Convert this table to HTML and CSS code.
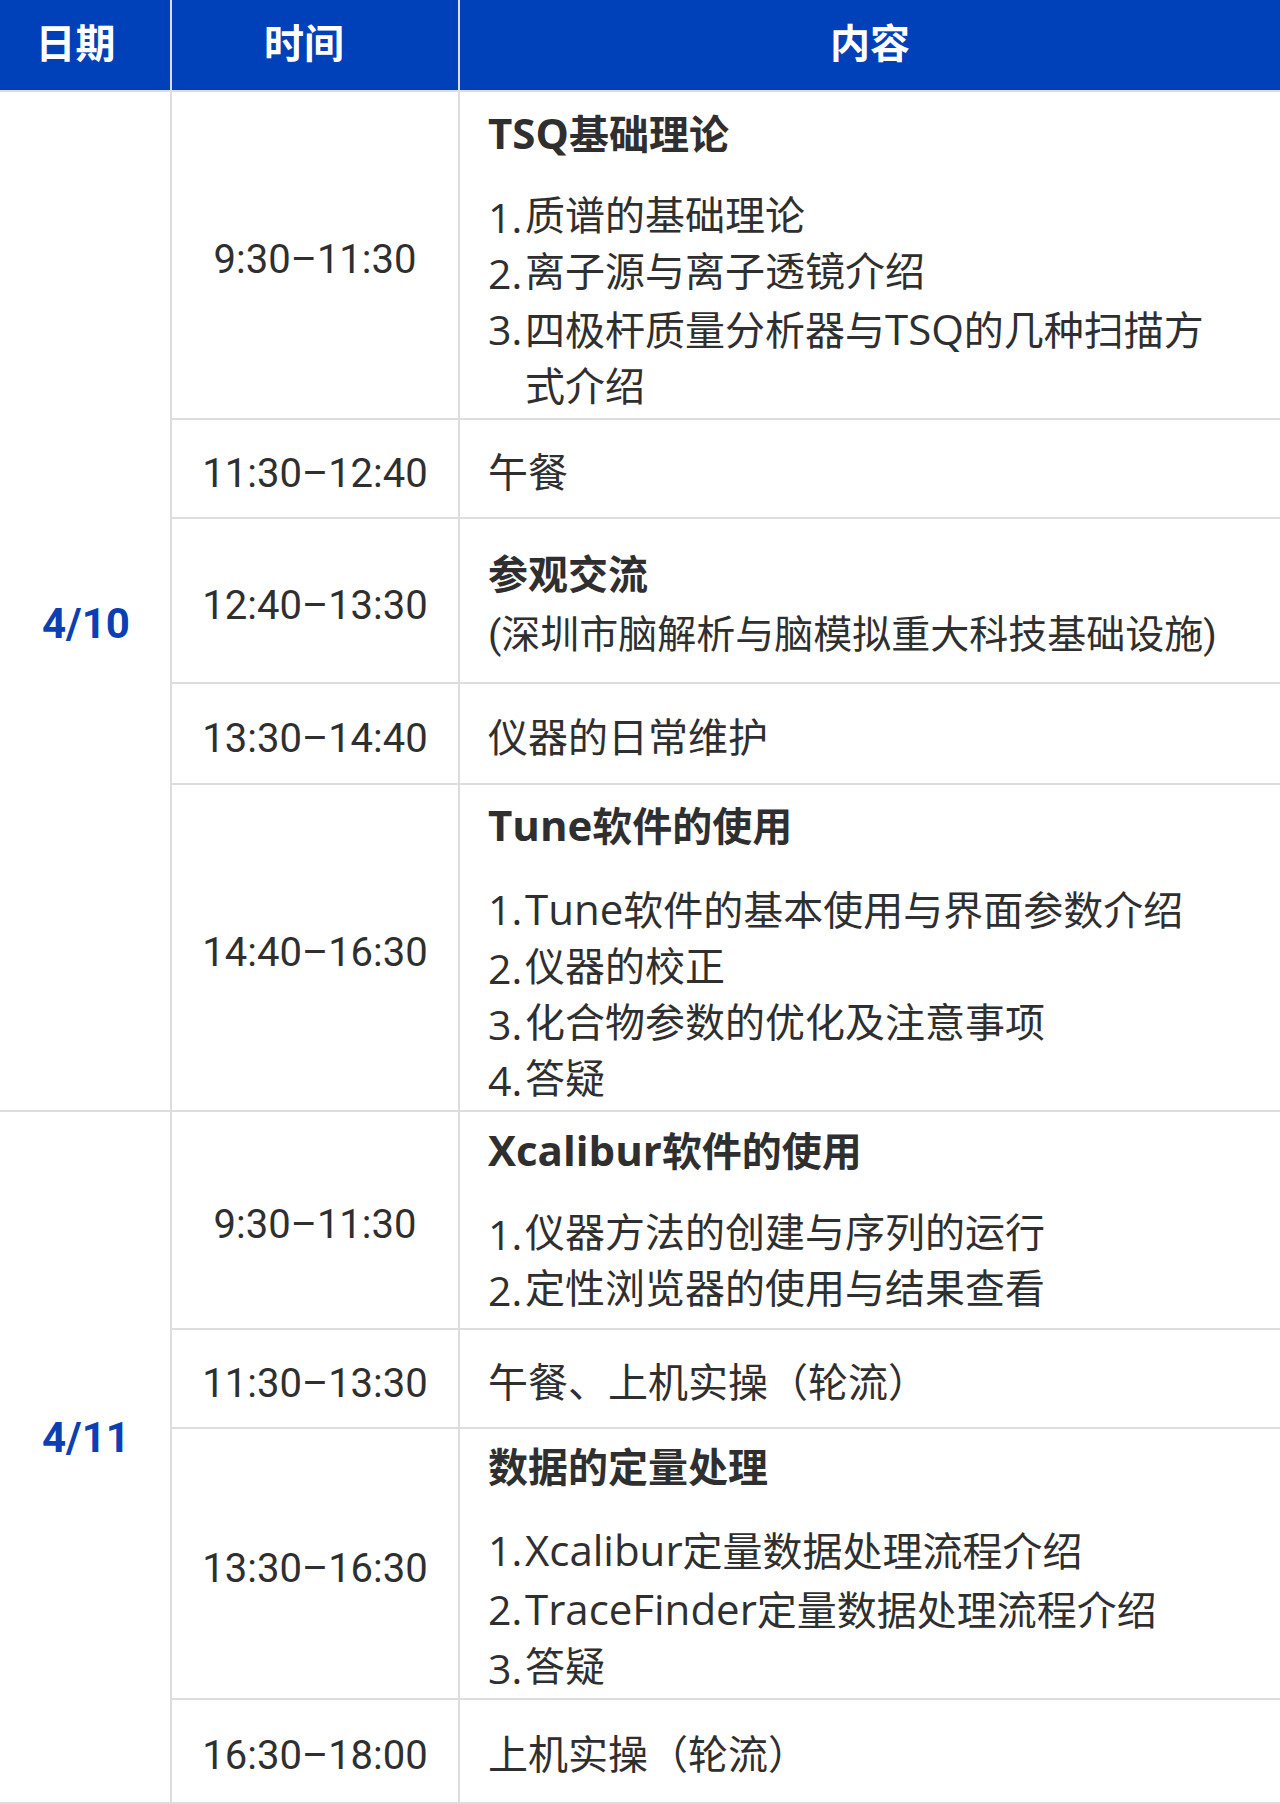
FILE: index.html
```html
<!DOCTYPE html>
<html lang="zh-CN">
<head>
<meta charset="utf-8">
<title>日程安排</title>
<link rel="stylesheet" href="styles.css">
</head>
<body>
<div class="schedule">
  <div class="th th-date">日期</div>
  <div class="th th-time">时间</div>
  <div class="th th-content">内容</div>

  <div class="date date-a">4/10</div>

  <div class="time r1">9:30–11:30</div>
  <div class="content r1">
    <div class="title spaced"><span class="lat">TSQ</span>基础理论</div>
    <div class="item"><span class="num">1.</span><span class="txt">质谱的基础理论</span></div>
    <div class="item"><span class="num">2.</span><span class="txt">离子源与离子透镜介绍</span></div>
    <div class="item"><span class="num">3.</span><span class="txt">四极杆质量分析器与<span class="lat">TSQ</span>的几种扫描方<br>式介绍</span></div>
  </div>

  <div class="time r2">11:30–12:40</div>
  <div class="content r2"><div class="line">午餐</div></div>

  <div class="time r3">12:40–13:30</div>
  <div class="content r3">
    <div class="title tight">参观交流</div>
    <div class="line sub">(深圳市脑解析与脑模拟重大科技基础设施)</div>
  </div>

  <div class="time r4">13:30–14:40</div>
  <div class="content r4"><div class="line">仪器的日常维护</div></div>

  <div class="time r5">14:40–16:30</div>
  <div class="content r5">
    <div class="title spaced"><span class="lat">Tune</span>软件的使用</div>
    <div class="item"><span class="num">1.</span><span class="txt"><span class="lat">Tune</span>软件的基本使用与界面参数介绍</span></div>
    <div class="item"><span class="num">2.</span><span class="txt">仪器的校正</span></div>
    <div class="item"><span class="num">3.</span><span class="txt">化合物参数的优化及注意事项</span></div>
    <div class="item"><span class="num">4.</span><span class="txt">答疑</span></div>
  </div>

  <div class="date date-b">4/11</div>

  <div class="time r6">9:30–11:30</div>
  <div class="content r6">
    <div class="title spaced"><span class="lat">Xcalibur</span>软件的使用</div>
    <div class="item"><span class="num">1.</span><span class="txt">仪器方法的创建与序列的运行</span></div>
    <div class="item"><span class="num">2.</span><span class="txt">定性浏览器的使用与结果查看</span></div>
  </div>

  <div class="time r7">11:30–13:30</div>
  <div class="content r7"><div class="line">午餐、上机实操（轮流）</div></div>

  <div class="time r8">13:30–16:30</div>
  <div class="content r8">
    <div class="title spaced">数据的定量处理</div>
    <div class="item"><span class="num">1.</span><span class="txt"><span class="lat">Xcalibur</span>定量数据处理流程介绍</span></div>
    <div class="item"><span class="num">2.</span><span class="txt"><span class="lat">TraceFinder</span>定量数据处理流程介绍</span></div>
    <div class="item"><span class="num">3.</span><span class="txt">答疑</span></div>
  </div>

  <div class="time r9">16:30–18:00</div>
  <div class="content r9"><div class="line">上机实操（轮流）</div></div>
</div>
</body>
</html>
```

FILE: styles.css
```css
html, body {
  margin: 0;
  padding: 0;
  background: #ffffff;
}

body {
  font-family: "Roboto", "Noto Sans CJK SC", sans-serif;
  color: #333333;
}

.schedule {
  display: grid;
  width: 1280px;
  grid-template-columns: 170px 286px 1fr;
  grid-template-rows: 90px 326px 97px 163px 99px 325px 216px 97px 269px 102px;
  column-gap: 2px;
  row-gap: 2px;
  padding-bottom: 2px;
  background: #dddddd;
}

.th {
  background: #0040b9;
  color: #ffffff;
  font-family: "Noto Sans CJK SC", sans-serif;
  font-weight: 700;
  font-size: 40px;
  display: flex;
  align-items: center;
  justify-content: center;
  padding-bottom: 8px;
}

.th-date { padding-right: 19px; }
.th-time { padding-right: 22px; }

.date {
  background: #ffffff;
  color: #0a40b4;
  font-family: "Roboto", "Noto Sans CJK SC", sans-serif;
  font-weight: 700;
  font-size: 42px;
  display: flex;
  align-items: center;
  padding-left: 42px;
}

.date-a { grid-column: 1; grid-row: 2 / 7; padding-top: 44px; }
.date-b { grid-column: 1; grid-row: 7 / 11; padding-bottom: 40px; }

.time {
  grid-column: 2;
  background: #ffffff;
  display: flex;
  align-items: center;
  justify-content: center;
  font-size: 40px;
  color: #2f2f2f;
  padding-top: 9px;
}

.content {
  grid-column: 3;
  background: #ffffff;
  display: flex;
  flex-direction: column;
  justify-content: center;
  padding-left: 28px;
  padding-top: 10px;
  font-size: 40px;
  line-height: 56px;
  color: #2f2f2f;
}

.r1 { grid-row: 2; }
.r2 { grid-row: 3; }
.r3 { grid-row: 4; }
.r4 { grid-row: 5; }
.r5 { grid-row: 6; }
.r6 { grid-row: 7; }
.r7 { grid-row: 8; }
.r8 { grid-row: 9; }
.r9 { grid-row: 10; }

.content.r6 { padding-top: 0; }

.title {
  font-weight: 700;
}

.title.spaced { margin-bottom: 25px; }
.title.tight { margin-bottom: 3px; }

.sub { font-size: 39px; }

.lat {
  font-family: "Open Sans", "Roboto", sans-serif;
  font-size: 42px;
}

.item {
  display: flex;
}

.num {
  flex: 0 0 37px;
  font-family: "Open Sans", "Roboto", sans-serif;
  font-size: 41px;
}
```
